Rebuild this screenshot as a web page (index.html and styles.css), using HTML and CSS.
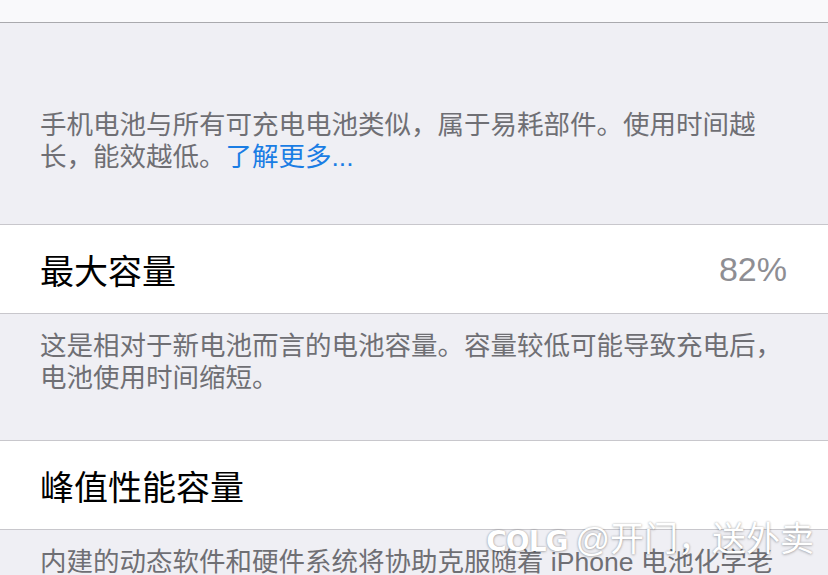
FILE: index.html
```html
<!DOCTYPE html>
<html lang="zh-CN">
<head>
  <meta charset="UTF-8">
  <title>电池健康</title>
  <link rel="stylesheet" href="styles.css">
</head>
<body>
<div class="screen">

  <div class="topBar"></div>

  <p class="sectionFooter first">
    手机电池与所有可充电电池类似，属于易耗部件。使用时间越<br>长，能效越低。<a class="link" href="#">了解更多...</a>
  </p>

  <div class="cell">
    <span class="cellTitle">最大容量</span>
    <span class="cellValue">82%</span>
  </div>

  <p class="sectionFooter">
    这是相对于新电池而言的电池容量。容量较低可能导致充电后，<br>电池使用时间缩短。
  </p>

  <div class="cell">
    <span class="cellTitle">峰值性能容量</span>
  </div>

  <p class="sectionFooter">
    内建的动态软件和硬件系统将协助克服随着 iPhone 电池化学老<br>化而可能出现的性能影响。
  </p>

  <div class="watermark">
    <span class="wmLogo">COLG</span>
    <span class="wmText">@开门，送外卖</span>
  </div>

</div>
</body>
</html>
```

FILE: styles.css
```css
html, body {
  margin: 0;
  padding: 0;
}

body {
  background: #efeff4;
  font-family: "Liberation Sans", "Noto Sans CJK SC", sans-serif;
  overflow: hidden;
}

.screen {
  position: relative;
  width: 828px;
  height: 575px;
  overflow: hidden;
}

.topBar {
  height: 22px;
  background: #f9f9fb;
  border-bottom: 1px solid #a9a9ad;
}

.sectionFooter {
  margin: 0;
  padding: 16px 40px 46px;
  font-size: 26.5px;
  line-height: 32px;
  color: #6f6f74;
  white-space: nowrap;
}

.sectionFooter.first {
  padding-top: 86px;
  padding-bottom: 51px;
}

.link {
  color: #1a7de4;
  text-decoration: none;
}

.cell {
  display: flex;
  align-items: center;
  justify-content: space-between;
  height: 88px;
  padding: 0 41px 0 40px;
  background: #fff;
  border-top: 1px solid #c8c7cc;
  border-bottom: 1px solid #c8c7cc;
}

.cellTitle {
  font-size: 34px;
  color: #000;
}

.cellValue {
  font-size: 34px;
  color: #8e8e93;
}

.watermark {
  position: absolute;
  right: 14px;
  top: 512px;
  display: flex;
  align-items: baseline;
  gap: 8px;
  color: #fff;
  text-shadow: 0 0 2px rgba(0, 0, 0, 0.3), 0 1px 3px rgba(0, 0, 0, 0.2);
}

.wmLogo {
  font-family: "DejaVu Sans", sans-serif;
  font-weight: bold;
  font-size: 28px;
  letter-spacing: -1px;
}

.wmText {
  font-size: 34px;
}
```
